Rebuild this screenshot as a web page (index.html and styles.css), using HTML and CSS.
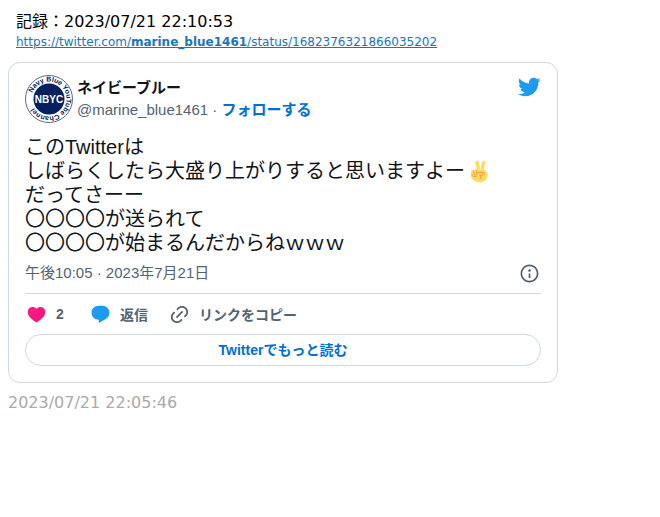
FILE: index.html
```html
<!DOCTYPE html>
<html lang="ja">
<head>
    <meta charset="UTF-8">
    <meta name="viewport" content="width=device-width, initial-scale=1.0">
    <title>ネイビーブルー - 2023/07/21</title>
    <link rel="stylesheet" href="styles.css">
</head>
<body>
    <header class="record">
        <div class="record-date">記録：2023/07/21 22:10:53</div>
        <a class="record-link" href="https://twitter.com/marine_blue1461/status/1682376321866035202">https://twitter.com/<b>marine_blue1461</b>/status/1682376321866035202</a>
    </header>

    <article class="tweet">
        <div class="tweet-header">
            <svg class="avatar" viewBox="0 0 48 48" role="img" aria-label="NBYC">
                <defs>
                    <path id="ring" d="M6.500 24A17.500 17.500 0 1 1 6.500 24.010"/>
                </defs>
                <circle cx="24" cy="24" r="23.500" fill="#fff" stroke="#5b6b8c"/>
                <circle cx="24" cy="24" r="15.500" fill="#04205f"/>
                <text class="avatar-ring"><textPath href="#ring" startOffset="6">Navy Blue YouTube Channel</textPath></text>
                <text class="avatar-name" x="24" y="28" text-anchor="middle">NBYC</text>
            </svg>
            <div class="author">
                <div class="author-name">ネイビーブルー</div>
                <div class="author-handle">@marine_blue1461 · <a class="follow" href="https://twitter.com/intent/follow?screen_name=marine_blue1461">フォローする</a></div>
            </div>
            <svg class="bird" viewBox="0 0 24 24" aria-hidden="true"><path d="M23.643 4.937c-.835.37-1.732.62-2.675.733.962-.576 1.7-1.49 2.048-2.578-.9.534-1.897.922-2.958 1.13-.85-.904-2.06-1.47-3.4-1.47-2.572 0-4.658 2.086-4.658 4.66 0 .364.042.718.12 1.06-3.873-.195-7.304-2.05-9.602-4.868-.4.69-.63 1.49-.63 2.342 0 1.616.823 3.043 2.072 3.878-.764-.025-1.482-.234-2.11-.583v.06c0 2.257 1.605 4.14 3.737 4.568-.392.106-.803.162-1.227.162-.3 0-.593-.028-.877-.082.593 1.85 2.313 3.198 4.352 3.234-1.595 1.25-3.604 1.995-5.786 1.995-.376 0-.747-.022-1.112-.065 2.062 1.323 4.51 2.093 7.14 2.093 8.57 0 13.255-7.098 13.255-13.254 0-.2-.005-.402-.014-.602.91-.658 1.7-1.477 2.323-2.41z"/></svg>
        </div>

        <div class="tweet-text">このTwitterは<br>
            しばらくしたら大盛り上がりすると思いますよー<svg class="emoji" viewBox="0 0 36 36" role="img" aria-label="ピース">
                <g fill="none" stroke="#ffdc5d" stroke-linecap="round">
                    <path stroke-width="5" d="M15 5l3 14"/>
                    <path stroke-width="5" d="M25 5l-3 14"/>
                </g>
                <path fill="#ffdc5d" d="M6 19c0-3 4-4 5-1 1-4 6-4 7 0l9-1c3 1 4 4 4 8 0 5-5 10-12 10S7 31 6 26z"/>
                <path fill="none" stroke="#ef9645" stroke-width="1.500" stroke-linecap="round" d="M10 18l1 5c1 2 4 1 4-1l-1-4M16 20l9 0c2 1 1 4-2 4h-4c2 1 2 4 1 6M7 23c1 3 4 4 7 3"/>
            </svg><br>
            だってさーー<br>
            〇〇〇〇が送られて<br>
            〇〇〇〇が始まるんだからねｗｗｗ
        </div>

        <div class="tweet-meta">
            <time datetime="2023-07-21T22:05">午後10:05 · 2023年7月21日</time>
            <button class="icon-btn" type="button" aria-label="情報">
                <svg class="icon" viewBox="0 0 24 24"><path d="M13.5 8.500c0 .83-.67 1.500-1.500 1.500s-1.500-.67-1.500-1.500S11.170 7 12 7s1.500.67 1.500 1.500zM13 17v-5h-2v5h2zm-1 5.250c5.660 0 10.250-4.590 10.250-10.250S17.660 1.750 12 1.750 1.750 6.340 1.750 12 6.340 22.250 12 22.250zM20.250 12c0 4.560-3.690 8.250-8.250 8.250S3.750 16.560 3.750 12 7.440 3.750 12 3.750s8.250 3.690 8.250 8.250z"/></svg>
            </button>
        </div>

        <div class="actions">
            <button class="action" type="button">
                <svg class="icon like" viewBox="0 0 24 24"><path d="M20.884 13.190c-1.351 2.480-4.001 5.120-8.379 7.670l-.503.3-.504-.3c-4.379-2.550-7.029-5.190-8.382-7.670-1.360-2.500-1.410-4.860-.514-6.670.887-1.790 2.647-2.910 4.601-3.010 1.651-.09 3.368.56 4.798 2.010 1.429-1.450 3.146-2.100 4.796-2.010 1.954.1 3.714 1.220 4.601 3.010.896 1.810.846 4.170-.514 6.670z"/></svg>
                2
            </button>
            <button class="action" type="button">
                <svg class="icon reply" viewBox="0 0 24 24"><path d="M1.751 10c0-4.420 3.584-8 8.005-8h4.366c4.490 0 8.129 3.640 8.129 8.130 0 2.960-1.607 5.680-4.196 7.110l-8.054 4.460v-3.690h-.067c-4.490.1-8.183-3.510-8.183-8.010z"/></svg>
                返信
            </button>
            <button class="action" type="button">
                <svg class="icon" viewBox="0 0 24 24"><path d="M18.360 5.640c-1.950-1.960-5.110-1.960-7.070 0L9.880 7.050 8.460 5.640l1.420-1.420c2.730-2.730 7.160-2.730 9.900 0 2.730 2.740 2.730 7.170 0 9.900l-1.420 1.420-1.410-1.420 1.410-1.410c1.960-1.960 1.960-5.120 0-7.070zm-2.120 3.530l-7.070 7.070-1.410-1.410 7.070-7.070 1.410 1.410zm-12.020.71l1.420-1.420 1.410 1.420-1.410 1.410c-1.960 1.960-1.960 5.120 0 7.070 1.950 1.960 5.110 1.960 7.070 0l1.410-1.410 1.420 1.410-1.420 1.420c-2.730 2.730-7.160 2.730-9.900 0-2.730-2.740-2.730-7.170 0-9.900z"/></svg>
                リンクをコピー
            </button>
        </div>

        <a class="read-more" href="https://twitter.com/marine_blue1461">Twitterでもっと読む</a>
    </article>

    <footer class="posted">2023/07/21 22:05:46</footer>
</body>
</html>
```
FILE: styles.css
```css
body {
    margin: 8px;
    background: #fff;
    color: #000;
    font-family: "DejaVu Sans", "Noto Sans CJK JP", sans-serif;
    font-size: 16px;
}
.record {
    padding: 2px 8px 12px;
}
.record-date {
    line-height: 24px;
}
.record-link {
    display: block;
    color: #1b75bc;
    font-size: 12px;
    line-height: 16px;
}
.tweet {
    box-sizing: border-box;
    max-width: 550px;
    padding: 12px 16px 16px;
    border: 1px solid #cfd9de;
    border-radius: 12px;
    color: #0f1419;
    font-family: "Liberation Sans", "Noto Sans CJK JP", sans-serif;
    font-size: 15px;
}
.tweet-header {
    display: flex;
    align-items: flex-start;
    gap: 4px;
    margin-bottom: 12px;
}
.avatar {
    width: 48px;
    height: 48px;
}
.avatar-ring {
    fill: #04205f;
    font-size: 7px;
    font-weight: bold;
}
.avatar-name {
    fill: #fff;
    font-size: 10px;
    font-weight: bold;
}
.author {
    flex: 1;
    line-height: 22px;
    padding-top: 2px;
}
.author-name {
    font-weight: bold;
}
.author-handle {
    color: #536471;
}
.follow {
    color: #006fd6;
    font-weight: bold;
    text-decoration: none;
}
.bird {
    width: 24px;
    height: 24px;
    fill: #1d9bf0;
}
.tweet-text {
    font-size: 20px;
    line-height: 24px;
}
.emoji {
    width: 24px;
    height: 24px;
    margin-left: 2px;
    vertical-align: top;
}
.tweet-meta {
    display: flex;
    justify-content: space-between;
    align-items: center;
    padding: 7px 0 9px;
    border-bottom: 1px solid #cfd9de;
    color: #536471;
    line-height: 22px;
}
.icon {
    display: block;
    width: 21px;
    height: 21px;
    fill: #536471;
}
.icon-btn {
    padding: 0 1px;
    border: none;
    background: none;
    cursor: pointer;
}
.actions {
    display: flex;
    gap: 20px;
    height: 40px;
}
.action {
    display: flex;
    align-items: center;
    gap: 9px;
    min-width: 44px;
    padding: 0 0 0 1px;
    border: none;
    background: none;
    color: #536471;
    font-family: inherit;
    font-size: 14px;
    font-weight: bold;
    cursor: pointer;
}
.like {
    fill: #f91880;
}
.reply {
    fill: #1d9bf0;
}
.read-more {
    display: block;
    border: 1px solid #cfd9de;
    border-radius: 16px;
    color: #006fd6;
    font-size: 14px;
    font-weight: bold;
    line-height: 30px;
    text-align: center;
    text-decoration: none;
}
.read-more:hover {
    background: #f0f7fd;
}
.posted {
    margin-top: 8px;
    color: #aaa;
    line-height: 24px;
}
```
